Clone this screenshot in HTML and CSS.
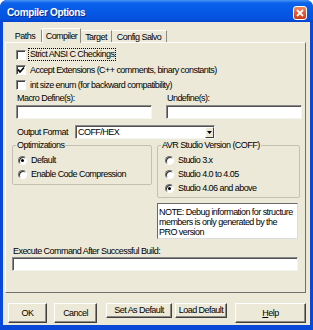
FILE: index.html
```html
<!DOCTYPE html>
<html lang="en">
<head>
  <meta charset="UTF-8" />
  <title>Compiler Options</title>
  <link rel="stylesheet" href="styles.css">
</head>
<body>
  <div class="window">
    <div class="titlebar">
      <span class="title">Compiler Options</span>
      <span class="close">
        <svg width="8" height="8" viewBox="0 0 8 8"><path d="M1 1L7 7M7 1L1 7" stroke="#fff" stroke-width="1.8" /></svg>
      </span>
    </div>
    <div class="client">
      <div class="tabs">
        <div class="tab w-paths">Paths</div>
        <div class="tab active w-compiler">Compiler</div>
        <div class="tab w-target">Target</div>
        <div class="tab w-salvo">Config Salvo</div>
      </div>
      <div class="panel">
        <div class="check"><span class="box"></span><span class="focus">Strict ANSI C Checkings</span></div>
        <div class="check">
          <span class="box"><svg width="8" height="8" viewBox="0 0 8 8"><path d="M1 3.5L3 6L7 1.5" fill="none" stroke="#000" stroke-width="1.6" /></svg></span>
          <span>Accept Extensions (C++ comments, binary constants)</span>
        </div>
        <div class="check"><span class="box"></span><span>int size enum (for backward compatibility)</span></div>

        <div class="defines">
          <div class="field">
            <div class="caption">Macro Define(s):</div>
            <div class="input"></div>
          </div>
          <div class="field">
            <div class="caption">Undefine(s):</div>
            <div class="input"></div>
          </div>
        </div>

        <div class="format-row">
          <span class="format-label">Output Format</span>
          <div class="select">
            <span class="select-value">COFF/HEX</span>
            <span class="drop"><svg width="5" height="3" viewBox="0 0 5 3"><path d="M0 0H5L2.5 3Z" fill="#000" /></svg></span>
          </div>
        </div>

        <div class="groups">
          <fieldset class="group opt">
            <legend>Optimizations</legend>
            <div class="radio"><span class="dot on"></span>Default</div>
            <div class="radio"><span class="dot"></span>Enable Code Compression</div>
          </fieldset>
          <div class="avr-col">
            <fieldset class="group avr">
              <legend>AVR Studio Version (COFF)</legend>
              <div class="radio"><span class="dot"></span>Studio 3.x</div>
              <div class="radio"><span class="dot"></span>Studio 4.0 to 4.05</div>
              <div class="radio"><span class="dot on"></span>Studio 4.06 and above</div>
            </fieldset>
            <div class="note">NOTE: Debug information for structure<br>members is only generated by the<br>PRO version</div>
          </div>
        </div>

        <div class="caption exec-caption">Execute Command After Successful Build:</div>
        <div class="input exec-input"></div>
      </div>

      <div class="buttons">
        <div class="btn big w-ok">OK</div>
        <div class="btn big w-cancel">Cancel</div>
        <div class="btn small w-setdef">Set As Default</div>
        <div class="btn small w-loaddef">Load Default</div>
        <div class="btn big w-help"><u>H</u>elp</div>
      </div>
    </div>
  </div>
</body>
</html>
```

FILE: styles.css
```css
body {
  margin: 0;
  padding: 0;
  background-color: #fff;
  font-family: "Liberation Sans", Arial, sans-serif;
  font-size: 9px;
  letter-spacing: -0.55px;
  white-space: nowrap;
  color: #000;
}
.window {
  width: 313px;
  height: 330px;
  background-color: #0a48d8;
  border-radius: 7px 7px 0 0;
  overflow: hidden;
}
.titlebar {
  height: 22px;
  display: flex;
  align-items: center;
  justify-content: space-between;
  padding: 0 6px 0 7px;
  box-sizing: border-box;
  background: linear-gradient(180deg, #4a95f8 0, #0b62ea 3px, #0659e6 50%, #0552de 85%, #0444cc 100%);
}
.title {
  color: #fff;
  font-weight: bold;
  font-size: 10px;
  letter-spacing: -0.35px;
  text-shadow: 1px 1px #0a2a8a;
  padding-top: 2px;
}
.close {
  width: 12px;
  height: 12px;
  margin-top: 3px;
  border: 1px solid #fff;
  border-radius: 3px;
  background: linear-gradient(180deg, #f08a62, #e0522a 60%, #c83c18);
  display: flex;
  align-items: center;
  justify-content: center;
}
.client {
  height: 303px;
  margin: 0 3px;
  background-color: #ece9d8;
  overflow: hidden;
}

/* tabs */
.tabs {
  display: flex;
  align-items: flex-end;
  height: 14px;
  padding: 6px 0 0 6px;
  position: relative;
  z-index: 1;
}
.tab {
  height: 12px;
  line-height: 12px;
  text-align: center;
  box-sizing: border-box;
  border-top: 1px solid #fff;
  border-left: 1px solid #fff;
  border-right: 1px solid #8a8a80;
}
.tab.active {
  height: 15px;
  line-height: 13px;
  padding-top: 1px;
  margin-bottom: -1px;
  background-color: #ece9d8;
}
.w-paths { width: 33px; border-left: none; border-top: none; }
.w-compiler { width: 39px; }
.w-target { width: 31px; border-left: none; }
.w-salvo { width: 55px; border-left: none; }

.panel {
  width: 301px;
  height: 251px;
  margin-left: 2px;
  box-sizing: border-box;
  padding: 4px 0 0 0;
  border-top: 1px solid #fff;
  border-left: 1px solid #fff;
  border-right: 1px solid #707070;
  border-bottom: 1px solid #707070;
}

/* check boxes */
.check {
  display: flex;
  align-items: center;
  height: 15px;
  padding-left: 10px;
}
.box {
  width: 10px;
  height: 10px;
  box-sizing: border-box;
  margin-right: 4px;
  background-color: #fff;
  border: 1px solid;
  border-color: #848484 #fff #fff #848484;
  box-shadow: inset 1px 1px #404040;
  display: flex;
  align-items: center;
  justify-content: center;
}
.focus {
  outline: 1px dotted #000;
  padding: 0 1px;
  margin-left: -1px;
  line-height: 11px;
}

/* text fields */
.caption {
  height: 12px;
  line-height: 12px;
  padding-left: 1px;
}
.input {
  height: 14px;
  margin-top: 1px;
  box-sizing: border-box;
  background-color: #fff;
  border: 1px solid;
  border-color: #8a8a8a #f4f4f0 #f4f4f0 #8a8a8a;
  box-shadow: inset 1px 1px #505050;
}
.defines {
  display: flex;
  gap: 14px;
  padding-left: 10px;
}
.field {
  width: 136px;
}

.format-row {
  display: flex;
  align-items: center;
  height: 14px;
  margin-top: 6px;
  padding-left: 11px;
}
.format-label {
  width: 58px;
}
.select {
  width: 140px;
  height: 14px;
  box-sizing: border-box;
  display: flex;
  justify-content: space-between;
  background-color: #fff;
  border: 1px solid;
  border-color: #8a8a8a #f4f4f0 #f4f4f0 #8a8a8a;
  box-shadow: inset 1px 1px #505050;
}
.select-value {
  padding: 1px 0 0 2px;
  line-height: 11px;
}
.drop {
  width: 9px;
  height: 11px;
  margin: 1px 0 0 0;
  box-sizing: border-box;
  background-color: #ece9d8;
  border: 1px solid;
  border-color: #fff #404040 #404040 #fff;
  display: flex;
  align-items: center;
  justify-content: center;
}

/* group boxes */
.groups {
  display: flex;
  gap: 5px;
  align-items: flex-start;
  margin-top: 1px;
  padding-left: 6px;
}
.group {
  margin: 0;
  padding: 0 0 2px 0;
  border: 1px solid #c4c1b2;
  border-radius: 2px;
  box-sizing: border-box;
}
.group legend {
  padding: 0 1px;
  line-height: 11px;
  height: 11px;
}
.opt {
  width: 140px;
  padding-left: 5px;
  padding-bottom: 3px;
}
.opt legend { margin-left: -2px; }
.avr {
  width: 143px;
  padding-left: 7px;
}
.avr legend { margin-left: -4px; }
.group .radio:first-of-type {
  margin-top: 2px;
}
.radio {
  display: flex;
  align-items: center;
  height: 14px;
}
.dot {
  width: 9px;
  height: 9px;
  box-sizing: border-box;
  margin-right: 4px;
  border-radius: 50%;
  background-color: #fff;
  border: 1px solid;
  border-color: #6e6e6e #fff #fff #6e6e6e;
  box-shadow: inset 1px 1px #303030;
  display: flex;
  align-items: center;
  justify-content: center;
}
.dot.on::after {
  content: "";
  width: 3px;
  height: 3px;
  border-radius: 50%;
  background-color: #000;
}
.note {
  width: 141px;
  height: 36px;
  margin-top: 5px;
  box-sizing: border-box;
  padding: 3px 0 0 1px;
  line-height: 10px;
  background-color: #fff;
  border: 1px solid;
  border-color: #6a6a6a #dcdcdc #dcdcdc #6a6a6a;
}

.exec-caption {
  margin-top: 6px;
  padding-left: 7px;
}
.exec-input {
  width: 286px;
  height: 14px;
  margin: 0 0 0 6px;
}

/* bottom buttons */
.buttons {
  display: flex;
  align-items: flex-start;
  margin-top: 10px;
  padding-left: 5px;
}
.btn {
  box-sizing: border-box;
  text-align: center;
  background-color: #ece9d8;
  border: 1px solid;
  border-color: #fff #404040 #404040 #fff;
  box-shadow: inset -1px -1px #8a8a80;
}
.btn.big {
  height: 20px;
  line-height: 18px;
}
.btn.small {
  height: 15px;
  line-height: 13px;
}
.w-ok { width: 39px; }
.w-cancel { width: 43px; margin-left: 7px; }
.w-setdef { width: 66px; margin-left: 9px; }
.w-loaddef { width: 52px; margin-left: 3px; }
.w-help { width: 71px; margin-left: 8px; }
```
